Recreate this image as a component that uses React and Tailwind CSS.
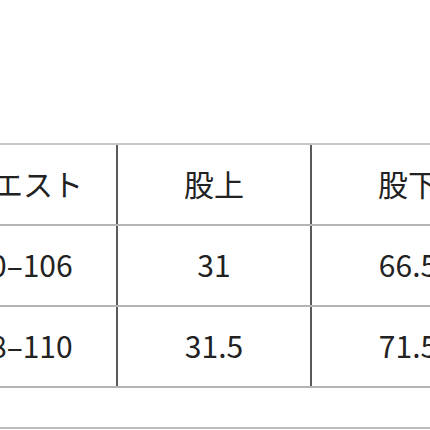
const rows = [
  ['ウエスト', '股上', '股下'],
  ['90–106', '31', '66.5'],
  ['98–110', '31.5', '71.5'],
];

const widths = ['w-[188px]', 'w-[194px]', 'w-[194px]'];

export default function App() {
  return (
    <div
      className="relative h-[430px] w-[430px] overflow-hidden bg-white text-[#222]"
      style={{ fontFamily: '"Noto Sans CJK JP", "Noto Sans", sans-serif' }}
    >
      <div className="ml-[-70px] w-[600px] pt-[143px]">
        <div className="border-t-2 border-[#c6c6c6]">
          {rows.map((row, i) => (
            <div key={i} className="flex border-b-2 border-[#b4b4b4]">
              {row.map((cell, j) => (
                <div
                  key={j}
                  className={`${widths[j]} flex h-[79px] shrink-0 items-center justify-center border-r-2 border-[#5a5a5a] pb-[3px] text-[30px] leading-none`}
                >
                  {cell}
                </div>
              ))}
            </div>
          ))}
        </div>
      </div>
      <div className="mt-[39px] border-t-2 border-[#bdbdbd]" />
    </div>
  );
}
